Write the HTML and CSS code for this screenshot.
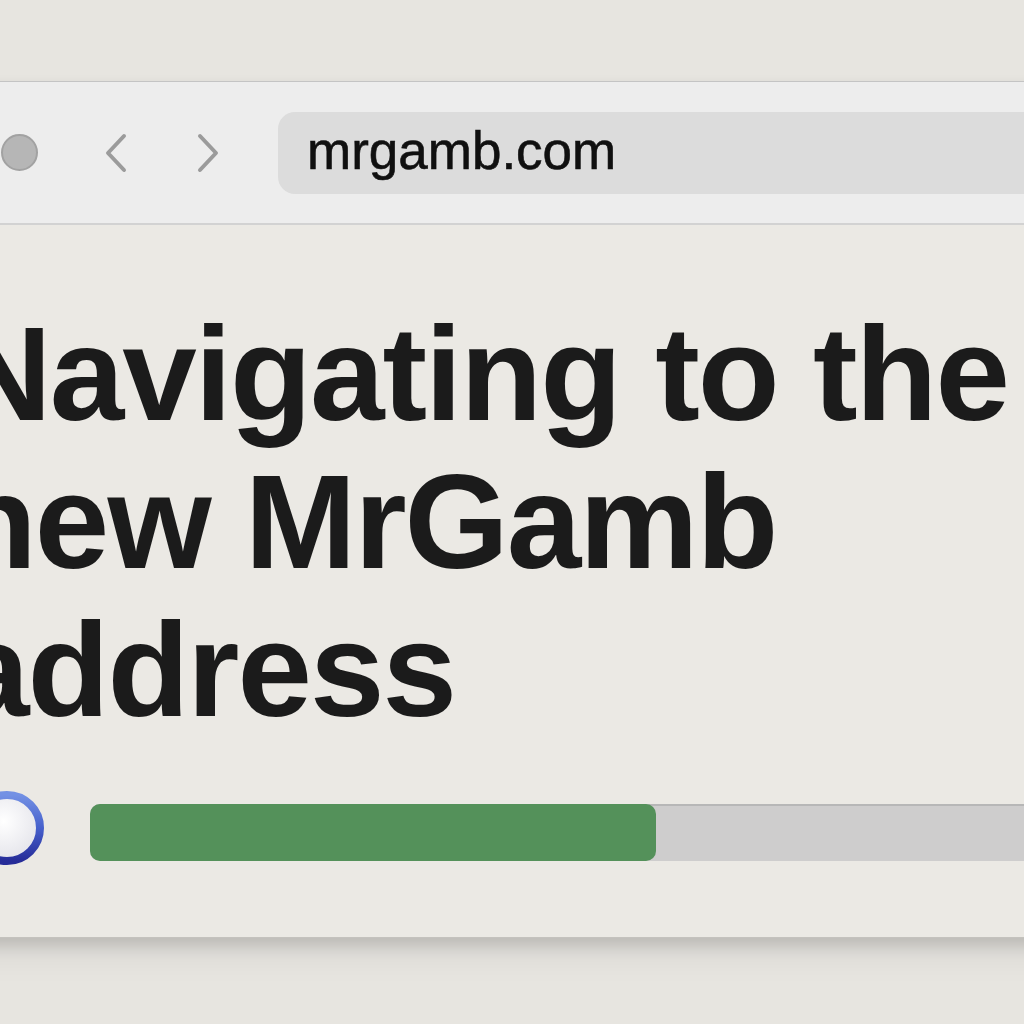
FILE: index.html
```html
<!DOCTYPE html>
<html lang="en">
<head>
    <meta charset="UTF-8">
    <meta name="viewport" content="width=device-width, initial-scale=1.0">
    <title>Navigating to the new MrGamb address</title>
    <link rel="stylesheet" href="styles.css">
</head>
<body>

<div class="window">
    <div class="toolbar">
        <span class="dot"></span>
        <button class="nav-btn" aria-label="Back">
            <svg width="24" height="40" viewBox="0 0 24 40">
                <polyline points="20,3 4,20 20,37" fill="none" stroke="#9b9b9b" stroke-width="4" stroke-linecap="round" stroke-linejoin="round"/>
            </svg>
        </button>
        <button class="nav-btn" aria-label="Forward">
            <svg width="24" height="40" viewBox="0 0 24 40">
                <polyline points="4,3 20,20 4,37" fill="none" stroke="#9b9b9b" stroke-width="4" stroke-linecap="round" stroke-linejoin="round"/>
            </svg>
        </button>
        <div class="address-bar">mrgamb.com</div>
    </div>

    <div class="content">
        <h1>Navigating to the<br>new MrGamb<br>address</h1>

        <div class="progress">
            <svg class="spinner" width="74" height="74" viewBox="0 0 74 74">
                <defs>
                    <linearGradient id="ring" x1="0" y1="0" x2="0" y2="1">
                        <stop offset="0" stop-color="#7391e4"/>
                        <stop offset="0.5" stop-color="#4660cc"/>
                        <stop offset="1" stop-color="#262c98"/>
                    </linearGradient>
                    <radialGradient id="face" cx="0.45" cy="0.4" r="0.6">
                        <stop offset="0" stop-color="#ffffff"/>
                        <stop offset="1" stop-color="#e4e4ea"/>
                    </radialGradient>
                </defs>
                <circle cx="37" cy="37" r="33" fill="url(#face)" stroke="url(#ring)" stroke-width="8"/>
            </svg>
            <div class="track">
                <div class="fill" style="width: 566px"></div>
            </div>
        </div>
    </div>
</div>

</body>
</html>
```

FILE: styles.css
```css
body {
    margin: 0;
    padding: 81px 0 0;
    background-color: #e7e5e0;
    font-family: "Liberation Sans", Arial, sans-serif;
    overflow: hidden;
    height: 1024px;
    box-sizing: border-box;
}
.window {
    width: 1200px;
    margin-left: -80px;
    background-color: #ebe9e4;
    border-top: 1px solid #c4c4c4;
    border-bottom: 1px solid #c4c2bd;
    box-shadow: 0 8px 14px rgba(0, 0, 0, 0.14), 0 20px 30px rgba(0, 0, 0, 0.06);
}
/* Browser toolbar */
.toolbar {
    display: flex;
    align-items: center;
    height: 141px;
    padding-left: 81px;
    background-color: #ededed;
    border-bottom: 2px solid #d2d2d2;
}
.dot {
    width: 33px;
    height: 33px;
    border-radius: 50%;
    background-color: #b6b6b6;
    border: 2px solid #a2a2a2;
    flex-shrink: 0;
}
.nav-btn {
    background: none;
    border: none;
    padding: 0;
    margin-left: 66px;
    display: flex;
    width: 24px;
    height: 40px;
}
.nav-btn + .nav-btn {
    margin-left: 68px;
}
.address-bar {
    flex: 1;
    height: 82px;
    margin-left: 58px;
    padding-left: 29px;
    display: flex;
    align-items: center;
    background-color: #dcdcdc;
    border-radius: 17px 0 0 17px;
    font-size: 53px;
    color: #101010;
    -webkit-text-stroke: 0.6px #101010;
    padding-bottom: 4px;
    box-sizing: border-box;
}
/* Page content */
.content {
    padding: 75px 20px 72px 35px;
}
h1 {
    margin: 0;
    font-size: 134px;
    line-height: 148px;
    font-weight: bold;
    letter-spacing: -2px;
    color: #1b1b1b;
}
.progress {
    display: flex;
    align-items: flex-start;
    margin-top: 47px;
}
.spinner {
    margin-left: 15px;
    flex-shrink: 0;
}
.track {
    flex: 1;
    height: 57px;
    margin-top: 13px;
    margin-left: 46px;
    background-color: #cecdcd;
    border-top: 2px solid #b7b7b7;
    border-radius: 10px 0 0 10px;
    box-sizing: border-box;
    display: flex;
}
.fill {
    margin-top: -2px;
    height: 57px;
    background-color: #54915a;
    border-radius: 10px;
}
```
